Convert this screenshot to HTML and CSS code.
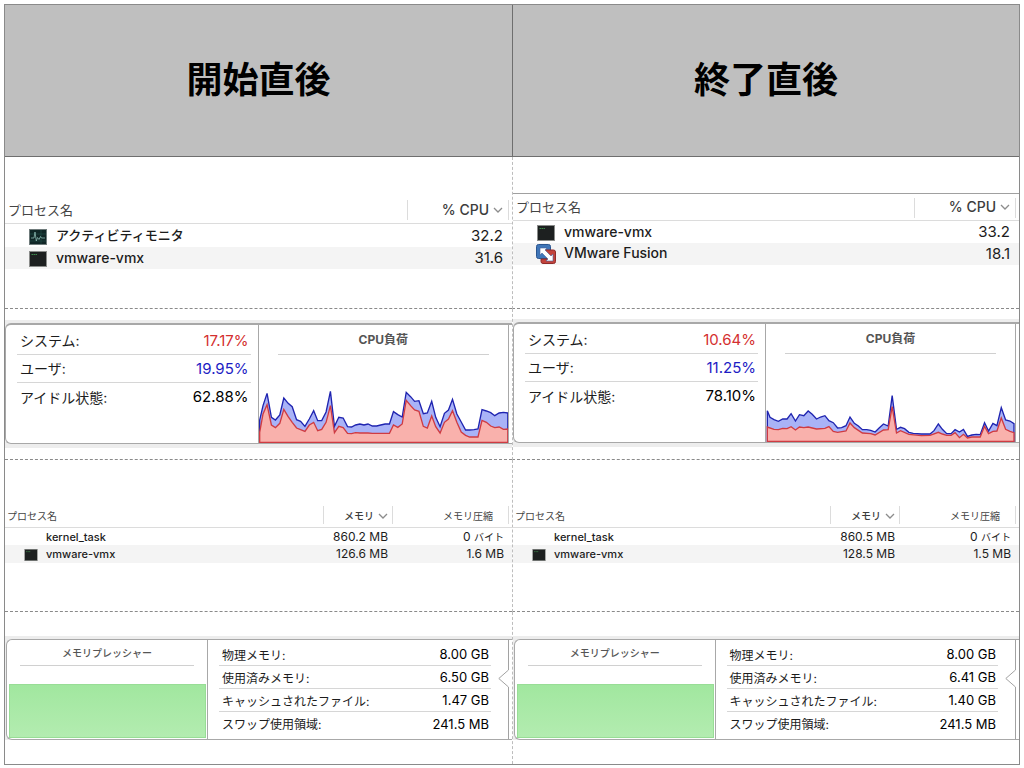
FILE: index.html
```html
<!DOCTYPE html>
<html lang="ja">
<head>
<meta charset="utf-8">
<title>開始直後 / 終了直後</title>
<link rel="stylesheet" href="styles.css">
</head>
<body>
<svg class="defs" aria-hidden="true">
  <symbol id="term" viewBox="0 0 18 16"><rect width="18" height="16" fill="#8a8c8a"/><rect x="1" y="1" width="16" height="14" fill="#1d2020"/><path d="M2.500 3.500h6" stroke="#3f8a4c" stroke-width="1" stroke-dasharray="1.500 .5"/></symbol>
  <symbol id="monitor" viewBox="0 0 18 16"><rect width="18" height="16" fill="#6f7b7b"/><rect x="1" y="1" width="16" height="14" fill="#102626"/><path d="M1 5h16M1 12h16M12 1v14" stroke="#24504c" stroke-width=".6"/><path d="M2 9h3l1-6 1.300 9 1.200-3.500 1.500 2 1.500-3 1 1.500H16" fill="none" stroke="#8ab8b0" stroke-width=".8"/></symbol>
  <symbol id="fusion" viewBox="0 0 20 20"><rect x=".5" y=".5" width="14" height="14" rx="2" fill="#3f76b8" stroke="#2a5590"/><path d="M7 6h10.500a2 2 0 0 1 2 2v9.500a2 2 0 0 1-2 2H7a2 2 0 0 1-2-2V15h9z" fill="#c2433c" stroke="#8f2b2a"/><path d="M4 4h7L9 6l6 6 2-2v7h-7l2-2-6-6-2 2z" fill="#fff" stroke="#48619a" stroke-width=".6"/></symbol>
  <symbol id="chev" viewBox="0 0 10 6"><path d="M1 1l4 4 4-4" fill="none" stroke="#8c8c8c" stroke-width="1.300"/></symbol>
</svg>
<main class="board">
  <h1 class="title">開始直後</h1>
  <h1 class="title">終了直後</h1>

  <section class="cell">
    <table class="procs cpu">
      <thead><tr><th class="name">プロセス名</th><th class="num"><button class="sort">% CPU<svg class="chev"><use href="#chev"/></svg></button></th></tr></thead>
      <tbody>
        <tr><td class="name"><svg class="icon"><use href="#monitor"/></svg><span class="ja">アクティビティモニタ</span></td><td class="num">32.2</td></tr>
        <tr><td class="name"><svg class="icon"><use href="#term"/></svg>vmware-vmx</td><td class="num">31.6</td></tr>
      </tbody>
    </table>
  </section>
  <section class="cell">
    <table class="procs cpu ruled">
      <thead><tr><th class="name">プロセス名</th><th class="num"><button class="sort">% CPU<svg class="chev"><use href="#chev"/></svg></button></th></tr></thead>
      <tbody>
        <tr><td class="name"><svg class="icon"><use href="#term"/></svg>vmware-vmx</td><td class="num">33.2</td></tr>
        <tr><td class="name"><svg class="icon app"><use href="#fusion"/></svg>VMware Fusion</td><td class="num">18.1</td></tr>
      </tbody>
    </table>
  </section>

  <section class="cell">
    <div class="strip load-strip">
      <div class="panel load">
        <dl class="stats">
          <div><dt>システム:</dt><dd class="red">17.17%</dd></div>
          <div><dt>ユーザ:</dt><dd class="blue">19.95%</dd></div>
          <div><dt>アイドル状態:</dt><dd>62.88%</dd></div>
        </dl>
        <figure class="graph">
          <figcaption>CPU負荷</figcaption>
          <svg class="plot" viewBox="24 225 744 162" preserveAspectRatio="none">
            <path class="user" d="M26 385V318L36 275 48 238 61 310 73 318 86 303 98 252 111 268 123 278 136 317 148 322 161 337 174 315 187 290 199 320 211 320 224 294 237 232 249 337 262 310 275 312 288 338 300 339 312 333 325 330 337 333 349 330 362 336 375 336 387 333 400 330 413 330 425 293 438 302 451 309 463 235 476 248 488 262 501 260 514 299 526 297 539 262 551 310 564 338 577 298 589 288 601 256 614 300 627 324 640 348 652 348 665 347 677 345 689 287 702 291 715 296 727 305 740 297 753 295 766 297V385z"/>
            <path class="sys" d="M26 385V355L36 300 48 272 61 333 73 341 86 328 98 286 111 308 123 325 136 342 148 347 161 352 174 333 187 325 199 350 211 346 224 325 237 275 249 356 262 337 275 341 288 358 300 359 312 356 325 357 349 357 362 358 413 358 425 333 438 340 451 330 463 259 476 275 488 288 501 292 514 337 526 342 539 306 551 338 564 357 577 325 589 315 601 290 614 325 627 354 640 364 652 369 677 369 689 319 702 325 715 336 727 341 740 339 753 346 766 345V385z"/>
          </svg>
        </figure>
      </div>
    </div>
  </section>
  <section class="cell">
    <div class="strip load-strip raised">
      <div class="panel load">
        <dl class="stats">
          <div><dt>システム:</dt><dd class="red">10.64%</dd></div>
          <div><dt>ユーザ:</dt><dd class="blue">11.25%</dd></div>
          <div><dt>アイドル状態:</dt><dd>78.10%</dd></div>
        </dl>
        <figure class="graph">
          <figcaption>CPU負荷</figcaption>
          <svg class="plot" viewBox="24 222 744 162" preserveAspectRatio="none">
            <path class="user" d="M28 382V290L36 310 48 317 61 322 74 315 87 315 99 299 112 321 124 302 137 305 150 291 162 301 175 315 187 309 200 305 212 320 225 326 238 342 250 341 263 335 275 309 288 328 300 336 312 347 325 347 337 349 350 354 362 342 375 330 389 336 401 245 414 346 426 340 438 344 451 355 464 358 488 360 514 360 526 350 539 330 551 346 564 359 577 359 589 347 602 354 614 346 626 367 639 363 652 361 664 362 677 326 689 351 702 328 714 335 727 281 740 318 753 321 765 329V382z"/>
            <path class="sys" d="M28 382V339L48 346 61 347 74 343 87 344 99 338 112 348 124 339 137 341 150 339 175 345 200 343 212 338 225 352 238 355 263 351 275 327 288 341 312 357 337 359 350 363 375 348 389 347 401 278 414 357 426 350 451 361 488 365 514 364 539 355 551 360 564 364 577 364 589 356 602 371 614 361 626 372 639 369 664 369 677 337 689 359 702 352 714 351 727 312 740 346 753 352 765 356V382z"/>
          </svg>
        </figure>
      </div>
    </div>
  </section>

  <section class="cell">
    <table class="procs mem">
      <thead><tr><th class="name">プロセス名</th><th class="num"><button class="sort">メモリ<svg class="chev"><use href="#chev"/></svg></button></th><th class="zip">メモリ圧縮</th></tr></thead>
      <tbody>
        <tr><td class="name"><span class="icon"></span>kernel_task</td><td class="num">860.2 MB</td><td class="zip">0 <span class="ja">バイト</span></td></tr>
        <tr><td class="name"><svg class="icon"><use href="#term"/></svg>vmware-vmx</td><td class="num">126.6 MB</td><td class="zip">1.6 MB</td></tr>
      </tbody>
    </table>
  </section>
  <section class="cell">
    <table class="procs mem">
      <thead><tr><th class="name">プロセス名</th><th class="num"><button class="sort">メモリ<svg class="chev"><use href="#chev"/></svg></button></th><th class="zip">メモリ圧縮</th></tr></thead>
      <tbody>
        <tr><td class="name"><span class="icon"></span>kernel_task</td><td class="num">860.5 MB</td><td class="zip">0 <span class="ja">バイト</span></td></tr>
        <tr><td class="name"><svg class="icon"><use href="#term"/></svg>vmware-vmx</td><td class="num">128.5 MB</td><td class="zip">1.5 MB</td></tr>
      </tbody>
    </table>
  </section>

  <section class="cell">
    <div class="strip mem-strip">
      <div class="panel pressure">
        <figure class="graph small">
          <figcaption>メモリプレッシャー</figcaption>
          <div class="level"></div>
        </figure>
        <dl class="stats compact">
          <div><dt>物理メモリ:</dt><dd>8.00 GB</dd></div>
          <div><dt>使用済みメモリ:</dt><dd>6.50 GB</dd></div>
          <div><dt>キャッシュされたファイル:</dt><dd>1.47 GB</dd></div>
          <div><dt>スワップ使用領域:</dt><dd>241.5 MB</dd></div>
        </dl>
        <svg class="notch" viewBox="0 0 12 99"><path d="M10.500 0V30L.8 38.500 10.500 47V99" fill="none" stroke="#a2a2a2"/></svg>
      </div>
    </div>
  </section>
  <section class="cell">
    <div class="strip mem-strip">
      <div class="panel pressure">
        <figure class="graph small">
          <figcaption>メモリプレッシャー</figcaption>
          <div class="level"></div>
        </figure>
        <dl class="stats compact">
          <div><dt>物理メモリ:</dt><dd>8.00 GB</dd></div>
          <div><dt>使用済みメモリ:</dt><dd>6.41 GB</dd></div>
          <div><dt>キャッシュされたファイル:</dt><dd>1.40 GB</dd></div>
          <div><dt>スワップ使用領域:</dt><dd>241.5 MB</dd></div>
        </dl>
        <svg class="notch" viewBox="0 0 12 99"><path d="M10.500 0V30L.8 38.500 10.500 47V99" fill="none" stroke="#a2a2a2"/></svg>
      </div>
    </div>
  </section>
</main>
</body>
</html>
```
FILE: styles.css
```css
* { box-sizing: border-box; }
body {
  margin: 0;
  padding: 4px 4px 3px;
  background: #fff;
  color: #1c1c1c;
  font-family: Inter, "Noto Sans CJK JP", sans-serif;
}
.defs { position: absolute; width: 0; height: 0; }
.board {
  display: grid;
  grid-template-columns: 1fr 1fr;
  grid-template-rows: repeat(5, 1fr);
  min-height: calc(100vh - 7px);
  border: 1px solid #8a8a8a;
}
.title {
  display: flex;
  align-items: center;
  justify-content: center;
  margin: 0;
  background: #bfbfbf;
  border-bottom: 1px solid #6e6e6e;
  font-size: 36px;
  line-height: 52px;
  font-weight: 700;
  color: #000;
}
.title:nth-child(2) { border-left: 1px solid #6e6e6e; }
.cell { border-bottom: 1px dashed #8a8a8a; min-width: 0; }
.cell:nth-child(even) { border-left: 1px dashed #bdbdbd; }
.cell:nth-last-child(-n+2) { border-bottom: 0; }

/* process lists */
.procs { width: 100%; table-layout: fixed; border-collapse: collapse; }
.procs th, .procs td { padding: 0; white-space: nowrap; overflow: hidden; }
.procs th { font-weight: 400; text-align: left; color: #444; border-bottom: 1px solid #dcdcdc; }
.procs .num, .procs .zip { text-align: right; }
.procs tbody tr:nth-child(2) { background: #f4f4f4; }
.procs svg, .procs .icon { vertical-align: middle; }
.icon { display: inline-block; }
.sort {
  display: inline-flex;
  align-items: center;
  gap: 4px;
  padding: 0;
  border: 0;
  background: none;
  font: inherit;
  font-weight: 500;
  color: #3c3c3c;
}
.chev { width: 10px; height: 6px; }

.cpu { margin-top: 39px; font-size: 14px; line-height: 18px; }
.cpu.ruled { margin-top: 36px; border-top: 1px solid #a0a0a0; }
.cpu th { height: 28px; }
.cpu.ruled th { height: 27px; }
.cpu td { height: 23px; font-weight: 500; }
.cpu tbody tr:last-child td { height: 22px; }
.cpu th.name { padding-left: 3px; font-size: 13px; }
.cpu td.name { padding-left: 24px; }
.cpu td .ja { font-size: 13px; }
.cpu .num { width: 105px; padding-right: 9px; }
.cpu td.num { font-weight: 400; font-size: 15px; }
.cpu th.num {
  background:
    linear-gradient(#dcdcdc, #dcdcdc) no-repeat left 4px / 1px 20px,
    linear-gradient(#dcdcdc, #dcdcdc) no-repeat right 3px top 4px / 1px 20px;
}
.cpu .icon { width: 18px; height: 16px; margin-right: 9px; }
.cpu .icon.app { width: 20px; height: 20px; margin: 0 8px 0 -1px; }

.mem { margin-top: 45px; font-size: 11px; line-height: 14px; }
.mem th { height: 22px; font-size: 10px; }
.mem td { height: 18px; font-weight: 500; }
.mem th.name { padding-left: 2px; }
.mem td.name { padding-left: 19px; }
.mem .num { width: 69px; padding-right: 4px; }
.mem .zip { width: 120px; padding-right: 8px; }
.mem th.zip { padding-right: 19px; }
.mem td.num, .mem td.zip { font-weight: 400; font-size: 12px; }
.mem td .ja { font-size: 10px; }
.mem th.num { background: linear-gradient(#dcdcdc, #dcdcdc) no-repeat left 1px / 1px 18px; }
.mem th.zip {
  background:
    linear-gradient(#dcdcdc, #dcdcdc) no-repeat left 1px / 1px 18px,
    linear-gradient(#dcdcdc, #dcdcdc) no-repeat right 3px top 1px / 1px 18px;
}
.mem .icon { width: 14px; height: 12px; margin-right: 8px; }

/* summary panels */
.strip { background: #ededed; }
.load-strip { margin-top: 11px; padding: 3px 0 4px; }
.load-strip.raised { margin-top: 10px; }
.mem-strip { margin-top: 24px; padding: 3px 0 0 1px; }
.panel {
  display: grid;
  background: #fff;
  border: 1px solid #a8a8a8;
  border-right: 0;
  border-radius: 6px 0 0 6px;
}
.load { grid-template-columns: 1fr 1fr; padding-right: 3px; border-width: 2px 0 1px 1px; }
.pressure { grid-template-columns: 201fr 290fr 12px; padding-right: 2px; }
.stats { margin: 0; padding: 2px 7px 32px 11px; }
.stats div {
  display: flex;
  align-items: center;
  justify-content: space-between;
  height: 28px;
  padding: 0 2px 0 3px;
  border-bottom: 1px solid #d6d6d6;
}
.stats div:last-child { border-bottom: 0; }
.stats dt { font-size: 14px; }
.stats dd { margin: 0; font-size: 15px; color: #000; }
.stats dd.red { color: #d4302f; }
.stats dd.blue { color: #1d1dc4; }
.stats.compact { padding: 3px 7px 4px 11px; }
.compact div { height: 23px; }
.compact dt { font-size: 12px; }
.compact dd { font-size: 13px; }

.graph { display: flex; flex-direction: column; margin: 0; border: 0 solid #a8a8a8; }
.load .graph { border-width: 0 1px; }
.small { border-right-width: 1px; }
.graph figcaption {
  margin: 0 19px;
  height: 30px;
  text-align: center;
  font-size: 12px;
  line-height: 30px;
  font-weight: 700;
  color: #555;
  border-bottom: 1px solid #d0d0d0;
}
.small figcaption { margin: 0 13px; height: 26px; font-size: 10px; line-height: 26px; font-weight: 500; }
.plot { width: 100%; height: 54px; margin-top: auto; display: block; }
.plot path { stroke-width: 4px; }
.user { fill: #a9b3f7; stroke: #1f24b0; }
.sys { fill: #f9b1ac; stroke: #cf3b42; }
.level {
  flex: 1;
  margin: 18px 1px 1px 2px;
  background: linear-gradient(#a1e79f, #b3ecb0);
  border: 1px solid #98dd96;
}
.notch { width: 12px; height: 99px; }
```
